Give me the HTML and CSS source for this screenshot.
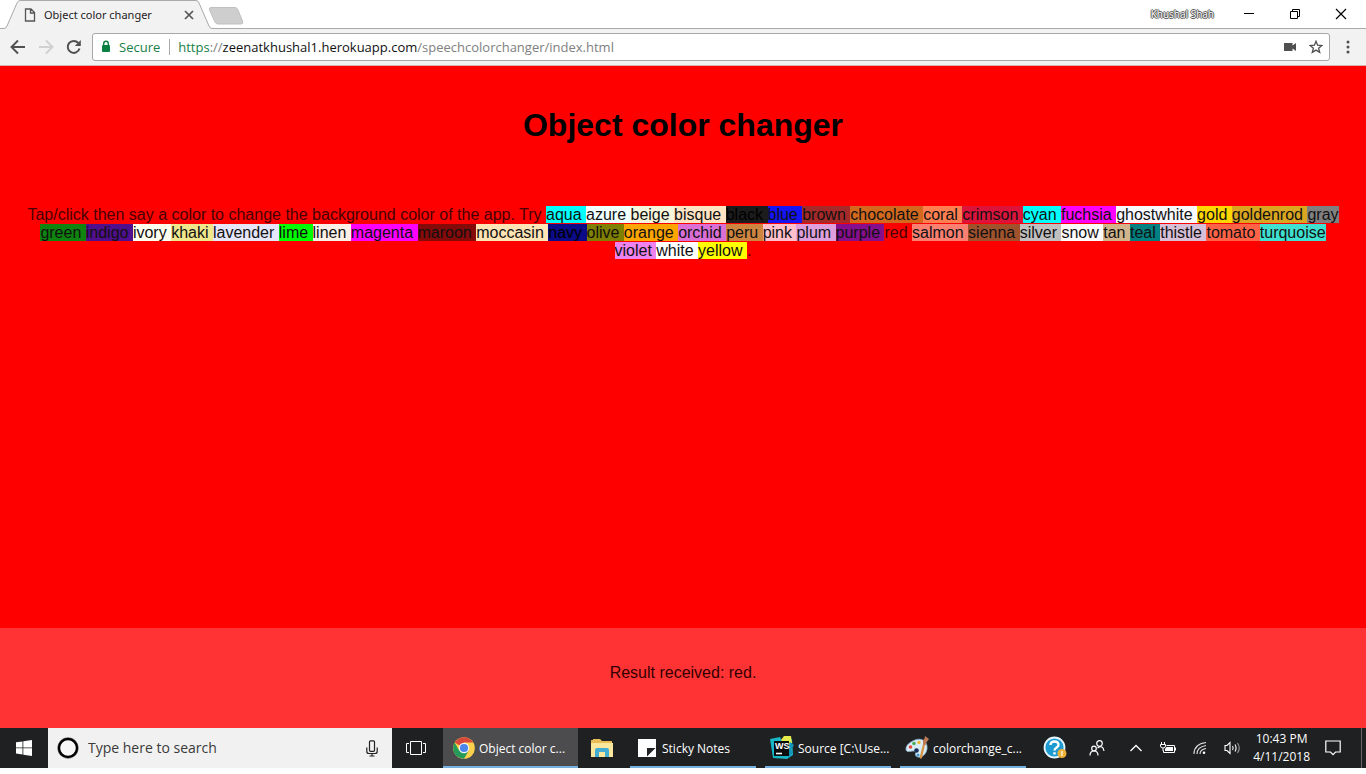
FILE: index.html
```html
<!DOCTYPE html>
<html lang="en">
<head>
<meta charset="utf-8">
<title>Object color changer</title>
<link rel="stylesheet" href="styles.css">
</head>
<body>
<div class="screen">
  <header class="browser">
    <div class="tabstrip">
      <svg class="tab-shape" width="244" height="29" viewBox="0 0 244 29" aria-hidden="true">
        <path d="M0 28.5H4Q6 28.5 7 26L17 3Q18.500 .5 20 .5H196Q198 .5 199 3L209 26Q210 28.500 212 28.500H244V29H0Z" fill="#f2f2f2"/>
        <path d="M0 28.500H4Q6 28.500 7 26L17 3Q18.500 .5 20 .5H196Q198 .5 199 3L209 26Q210 28.500 212 28.500H244" fill="none" stroke="#a9a9a9"/>
        <path d="M211 7.500H235Q237 7.500 238 10L242.500 21Q243.500 24 241 24H218Q216 24 215 22L209.500 10Q208.500 7.500 211 7.500Z" fill="#cecece" stroke="#c0c0c0"/>
      </svg>
      <div class="tab">
        <svg width="12" height="14" viewBox="0 0 12 14" fill="none" stroke="#555" stroke-width="1.300"><path d="M1.500 1H7L10.500 4.500V13H1.500ZM6.500 1V5H10.500"/></svg>
        <span class="tab-title">Object color changer</span>
        <button class="plain" aria-label="Close tab"><svg width="10" height="10" viewBox="0 0 10 10" stroke="#555" stroke-width="1.700"><path d="M1 1L9 9M9 1L1 9"/></svg></button>
      </div>
      <div class="window-controls">
        <span class="user">Khushal Shah</span>
        <button class="plain" aria-label="Minimize"><svg width="12" height="12" viewBox="0 0 12 12" stroke="#000"><path d="M1 5.500H11"/></svg></button>
        <button class="plain" aria-label="Restore"><svg width="12" height="12" viewBox="0 0 12 12" fill="none" stroke="#000"><path d="M1.500 3.500H8.500V10.500H1.500ZM3.500 3.500V1.500H10.500V8.500H8.500"/></svg></button>
        <button class="plain" aria-label="Close"><svg width="12" height="12" viewBox="0 0 12 12" stroke="#000" stroke-width="1.200"><path d="M1 1L11 11M11 1L1 11"/></svg></button>
      </div>
    </div>
    <div class="toolbar">
      <div class="nav">
        <button class="plain" aria-label="Back"><svg width="16" height="16" viewBox="0 0 16 16" fill="none" stroke="#505050" stroke-width="1.900"><path d="M15 8H2M8 1.500L1.500 8L8 14.500"/></svg></button>
        <button class="plain" aria-label="Forward"><svg width="16" height="16" viewBox="0 0 16 16" fill="none" stroke="#d0d0d0" stroke-width="1.900"><path d="M1 8H14M8 1.500L14.500 8L8 14.500"/></svg></button>
        <button class="plain" aria-label="Reload"><svg width="16" height="16" viewBox="0 0 16 16"><path d="M13.500 9.500A6 6 0 1 1 12.300 4" fill="none" stroke="#505050" stroke-width="2"/><path d="M14.800 1V7H8.800Z" fill="#505050"/></svg></button>
      </div>
      <div class="omnibox">
        <svg width="10" height="13" viewBox="0 0 10 13"><rect x="1" y="5" width="8" height="7" rx="1" fill="#0b8043"/><path d="M2.700 5V3.500A2.300 2.300 0 0 1 7.300 3.500V5" fill="none" stroke="#0b8043" stroke-width="1.400"/></svg>
        <span class="secure">Secure</span>
        <span class="address"><span class="scheme">https</span>://<span class="host">zeenatkhushal1.herokuapp.com</span>/speechcolorchanger/index.html</span>
        <svg width="14" height="10" viewBox="0 0 14 10" fill="#505050"><path d="M1 1H9.500V3.500L13 1V9L9.500 6.500V9H1Z"/></svg>
        <button class="plain" aria-label="Bookmark this page"><svg width="14" height="14" viewBox="0 0 14 14" fill="none" stroke="#505050" stroke-width="1.300"><path d="M7 1.300L8.600 5.200L12.900 5.500L9.600 8.200L10.700 12.400L7 10.100L3.300 12.400L4.400 8.200L1.100 5.500L5.400 5.200Z"/></svg></button>
      </div>
      <button class="plain menu" aria-label="Menu"><svg width="4" height="14" viewBox="0 0 4 14" fill="#505050"><circle cx="2" cy="2" r="1.500"/><circle cx="2" cy="7" r="1.500"/><circle cx="2" cy="12" r="1.500"/></svg></button>
    </div>
  </header>

  <main class="page">
    <h1 class="heading">Object color changer</h1>
    <p class="hints">Tap/click then say a color to change the background color of the app. Try
      <span class="c aqua">aqua </span><span class="c azure">azure </span><span class="c beige">beige </span><span class="c bisque">bisque </span><span class="c black">black </span><span class="c blue">blue </span><span class="c brown">brown </span><span class="c chocolate">chocolate </span><span class="c coral">coral </span><span class="c crimson">crimson </span><span class="c cyan">cyan </span><span class="c fuchsia">fuchsia </span><span class="c ghostwhite">ghostwhite </span><span class="c gold">gold </span><span class="c goldenrod">goldenrod </span><span class="c gray">gray </span><span class="c green">green </span><span class="c indigo">indigo </span><span class="c ivory">ivory </span><span class="c khaki">khaki </span><span class="c lavender">lavender </span><span class="c lime">lime </span><span class="c linen">linen </span><span class="c magenta">magenta </span><span class="c maroon">maroon </span><span class="c moccasin">moccasin </span><span class="c navy">navy </span><span class="c olive">olive </span><span class="c orange">orange </span><span class="c orchid">orchid </span><span class="c peru">peru </span><span class="c pink">pink </span><span class="c plum">plum </span><span class="c purple">purple </span><span class="c red">red </span><span class="c salmon">salmon </span><span class="c sienna">sienna </span><span class="c silver">silver </span><span class="c snow">snow </span><span class="c tan">tan </span><span class="c teal">teal </span><span class="c thistle">thistle </span><span class="c tomato">tomato </span><span class="c turquoise">turquoise </span><span class="c violet">violet </span><span class="c white">white </span><span class="c yellow">yellow </span>.</p>
    <div class="result"><p class="output">Result received: red.</p></div>
  </main>

  <footer class="taskbar">
    <button class="plain start" aria-label="Start"><svg width="16" height="16" viewBox="0 0 16 16" fill="#fff"><path d="M0 2.300L6.500 1.400V7.500H0ZM7.300 1.300L16 0V7.500H7.300ZM0 8.300H6.500V14.500L0 13.600ZM7.300 8.300H16V16L7.300 14.700Z"/></svg></button>
    <div class="search">
      <svg width="22" height="22" viewBox="0 0 22 22"><circle cx="11" cy="11" r="9" fill="#fff" stroke="#888" stroke-width="3.400"/><circle cx="11" cy="11" r="9" fill="#f6f6f6" stroke="#000" stroke-width="2.400"/></svg>
      <input class="search-box" type="text" aria-label="Search" placeholder="Type here to search">
      <svg width="12" height="17" viewBox="0 0 12 17" fill="none" stroke="#222" stroke-width="1.200"><rect x="3.500" y=".8" width="5" height="10.500" rx="1"/><path d="M.8 7.500V11.500Q.8 13.500 3 13.500H9Q11.200 13.500 11.200 11.500V7.500M6 13.500V16M3.500 16H8.500"/></svg>
    </div>
    <button class="plain taskview" aria-label="Task view"><svg width="20" height="14" viewBox="0 0 20 14" fill="none" stroke="#fff"><path d="M4.500 .5H15.500V13.500H4.500ZM3 2.500H.5V11.500H3M17 2.500H19.500V11.500H17"/></svg></button>
    <button class="plain task active">
      <svg width="22" height="22" viewBox="0 0 22 22"><circle cx="11" cy="11" r="10.800" fill="#fbd04b"/><path d="M11 11L1.650 5.600A10.800 10.800 0 0 1 20.350 5.600H11Z" fill="#d9493a"/><path d="M1.650 5.600A10.800 10.800 0 0 0 11 21.800L15.700 13.700L11 11L6.300 13.700Z" fill="#249b58"/><circle cx="11" cy="11" r="5.300" fill="#f4f4f4"/><circle cx="11" cy="11" r="4.100" fill="#4b86ec"/></svg>
      <span>Object color c...</span>
    </button>
    <button class="plain explorer" aria-label="File Explorer"><svg width="22" height="20" viewBox="0 0 22 20"><path d="M0 2H2V1H9L11 3H21V19H0Z" fill="#e8bd55"/><path d="M0 5H22V19H0Z" fill="#fbe69d"/><path d="M4 19V12Q4 10 6 10H16Q18 10 18 12V19H14V14H8V19Z" fill="#43acd3"/></svg></button>
    <button class="plain task">
      <svg width="18" height="18" viewBox="0 0 18 18"><path d="M0 0H18V18H0Z" fill="#fff"/><path d="M9 9H17.500L9 17.500Z" fill="#1f2124"/></svg>
      <span>Sticky Notes</span>
    </button>
    <button class="plain task">
      <svg width="24" height="24" viewBox="0 0 24 24"><path d="M0 3L10 1L12 5L22 3L23 19L17 23L3 22Z" fill="#17b7c8"/><path d="M11 4L14 0H21L22 7L14 8Z" fill="#e5eb4d"/><path d="M20 6L24 9L21 14L23 17L18 22Z" fill="#1395ba"/><path d="M4 5H19V20H4Z" fill="#090b0c"/><path d="M6 17.500H12" stroke="#fff" stroke-width="1.600"/><text class="ws-mark" x="5" y="13">WS</text></svg>
      <span>Source [C:\Use...</span>
    </button>
    <button class="plain task">
      <svg width="24" height="24" viewBox="0 0 24 24"><path d="M10 4C18 1 23 7 22 13C21 20 14 23 11 20C9 18 13 16 9 15C5 15 1 17 1 13C1 9 5 6 10 4Z" fill="#d9edf8" stroke="#8db5cf" stroke-width=".8"/><circle cx="5.500" cy="11" r="1.800" fill="#df493b"/><circle cx="9" cy="7.500" r="1.800" fill="#49ac56"/><circle cx="14" cy="6.500" r="1.700" fill="#efb935"/><circle cx="11.500" cy="14.500" r="2.300" fill="#172d56"/><circle cx="13" cy="19" r="1.600" fill="#4696d0"/><path d="M18 8L20 9L17 22Q14 24 15 20Z" fill="#d69447"/><path d="M18 9L18 4Q20 3 20 0L24 3Q22 5 20.500 9Z" fill="#bf7b56"/></svg>
      <span>colorchange_c...</span>
    </button>
    <div class="tray">
      <button class="plain help" aria-label="Help"><svg width="24" height="24" viewBox="0 0 24 24"><circle cx="11.500" cy="11.500" r="10" fill="#1d9bd1" stroke="#e7f6fc" stroke-width="1.800"/><path d="M7.500 9Q7.500 5.500 11.500 5.500T15.500 9C15.500 11.500 11.500 11.500 11.500 14.500M11.500 16.300V18.500" fill="none" stroke="#fff" stroke-width="2.400"/><circle cx="19" cy="17.500" r="4.500" fill="#edb136"/><path d="M19 15V20" stroke="#fff" stroke-width="1.200"/></svg></button>
      <button class="plain people" aria-label="People"><svg width="16" height="16" viewBox="0 0 16 16" fill="none" stroke="#fff" stroke-width="1.200"><circle cx="10.500" cy="3.500" r="2.800"/><circle cx="5" cy="8.500" r="2.300"/><path d="M1 15.500Q1 11 5 11T9 15.500M8.500 8Q14 4.500 15 11"/></svg></button>
      <button class="plain" aria-label="Show hidden icons"><svg width="14" height="8" viewBox="0 0 14 8" fill="none" stroke="#fff" stroke-width="1.300"><path d="M1.500 7L7 1.500L12.500 7"/></svg></button>
      <button class="plain" aria-label="Battery"><svg width="16" height="13" viewBox="0 0 16 13"><path d="M6.500 3.500H14.500V10.500H3.500V8.500" fill="none" stroke="#fff"/><path d="M6.500 5H13V9H5V7ZM15 5.500H16V8.500H15Z" fill="#fff"/><path d="M1.500 0V2.500M4.500 0V2.500M.5 2.500H5.500V4Q5.500 6 3 6T.5 4ZM3 6V9" fill="none" stroke="#fff"/></svg></button>
      <button class="plain" aria-label="Wi-Fi"><svg width="14" height="14" viewBox="0 0 14 14" fill="none" stroke="#ddd" stroke-width="1.100"><path d="M1 13Q1 3 13 1.500M4 13Q4 6 13 4.500M7 13Q7 8.500 13 7.500"/><circle cx="11" cy="11.800" r="1.300" fill="#fff" stroke="none"/></svg></button>
      <button class="plain" aria-label="Volume"><svg width="17" height="14" viewBox="0 0 17 14" fill="none" stroke="#fff" stroke-width="1.100"><path d="M1 4.500H3L6 1.500V12.500L3 9.500H1ZM8.500 5Q10 7 8.500 9M11 3.500Q13.200 7 11 10.500"/><path d="M13.500 2Q17 7 13.500 12" stroke="#999"/></svg></button>
      <time class="clock" datetime="2018-04-11T22:43"><span>10:43 PM</span><span>4/11/2018</span></time>
      <button class="plain notifications" aria-label="Notifications"><svg width="16" height="16" viewBox="0 0 16 16" fill="none" stroke="#fff" stroke-width="1.200"><path d="M.8 1H15.200V12H10.500L8 14.700L5.500 12H.8Z"/></svg></button>
    </div>
  </footer>
</div>
</body>
</html>
```
FILE: styles.css
```css
* { box-sizing: border-box; }
html { height: 100%; background: #fff; }
body { margin: 0; height: 100%; padding-bottom: 6px; font-family: "Open Sans", "Noto Sans", sans-serif; }
svg { display: block; flex: none; }
.plain { margin: 0; padding: 0; border: 0; background: none; color: inherit; font: inherit; }
.screen { height: 100%; display: flex; flex-direction: column; }

.tabstrip { position: relative; height: 29px; display: flex; align-items: center; background: linear-gradient(#a9a9a9, #a9a9a9) bottom / 100% 1px no-repeat #fff; }
.tab-shape { position: absolute; left: 0; top: 0; }
.tab { position: relative; width: 194px; padding-left: 24px; display: flex; align-items: center; gap: 8px; font-size: 12px; line-height: 16px; color: #222; }
.tab-title { flex: 1; white-space: nowrap; font-family: "Noto Sans", sans-serif; font-size: 11px; }
.window-controls { margin-left: auto; padding-right: 19px; display: flex; align-items: center; gap: 34px; padding-bottom: 2px; }
.user { font-size: 10px; line-height: 14px; color: #fff; text-shadow: 1px 0 #555, -1px 0 #555, 0 1px #555, 0 -1px #555, 0 0 2px #777; margin-right: -5px; }
.toolbar { height: 37px; padding: 0 16px 1px 10px; display: flex; align-items: center; background: #f2f2f2; border-bottom: 1px solid #d8b0b0; }
.nav { display: flex; gap: 12px; width: 82px; }
.omnibox { flex: 1; height: 28px; border: 1px solid #a8a8a8; border-radius: 3px; background: #fff; display: flex; align-items: center; padding: 0 6px 0 8px; gap: 8px; font-size: 13px; line-height: 18px; }
.secure { color: #188048; padding-right: 9px; border-right: 1px solid #aaa; line-height: 16px; }
.address { flex: 1; color: #808080; white-space: nowrap; }
.scheme { color: #188048; }
.host { color: #111; }
.omnibox > svg:nth-of-type(2) { margin-right: 4px; }
.menu { margin-left: 16px; }

.page { flex: 1; min-height: 0; display: flex; flex-direction: column; background: #f00; font-family: "Liberation Sans", Arial, sans-serif; font-size: 16px; text-align: center; color: #000; }
.heading { margin: 0; padding: 41px 20px; font-size: 32px; line-height: 37px; }
.hints { margin: 0; padding: 21px 20px; line-height: 18px; color: #480000; }
.c { color: #111; }
.result { margin-top: auto; height: 100px; background: #f33; display: flex; justify-content: center; padding-top: 36px; }
.output { margin: 0; line-height: 18px; color: #300; }
.aqua { background: aqua; }
.azure { background: azure; }
.beige { background: beige; }
.bisque { background: bisque; }
.black { background: #1c1c1c; color: #000; }
.blue { background: #1414f5; }
.brown { background: brown; }
.chocolate { background: chocolate; }
.coral { background: coral; }
.crimson { background: crimson; }
.cyan { background: cyan; }
.fuchsia { background: fuchsia; }
.ghostwhite { background: ghostwhite; }
.gold { background: gold; }
.goldenrod { background: goldenrod; }
.gray { background: gray; }
.green { background: #0f850f; }
.indigo { background: #500f8c; }
.ivory { background: ivory; }
.khaki { background: khaki; }
.lavender { background: lavender; }
.lime { background: lime; }
.linen { background: linen; }
.magenta { background: magenta; }
.maroon { background: #850a0a; }
.moccasin { background: moccasin; }
.navy { background: #0c0c88; color: #000; }
.olive { background: olive; }
.orange { background: orange; }
.orchid { background: orchid; }
.peru { background: peru; }
.pink { background: pink; }
.plum { background: plum; }
.purple { background: #850f8c; }
.red { background: red; color: #480000; }
.salmon { background: salmon; }
.sienna { background: sienna; }
.silver { background: silver; }
.snow { background: snow; }
.tan { background: tan; }
.teal { background: teal; }
.thistle { background: thistle; }
.tomato { background: tomato; }
.turquoise { background: turquoise; }
.violet { background: violet; }
.white { background: white; }
.yellow { background: yellow; }

.taskbar { height: 40px; display: flex; align-items: stretch; background: #1e2022; color: #fff; font-size: 12px; }
.taskbar > .plain { display: flex; align-items: center; flex: none; }
.start, .taskbar > .taskview, .taskbar > .explorer { justify-content: center; }
.start { width: 48px; }
.search { width: 344px; background: #f1f1f1; display: flex; align-items: center; gap: 9px; padding: 0 14px 0 9px; }
.search-box { flex: 1; min-width: 0; border: 0; padding: 0; background: none; font: 14px/20px "Open Sans", sans-serif; color: #333; }
.search-box::placeholder { color: #3a3a3a; opacity: 1; }
.taskview { width: 51px; padding-right: 3px; }
.explorer { width: 47px; }
.taskbar > .task { width: 126px; margin-right: 9px; padding: 2px 0 0 5px; gap: 4px; border-bottom: 2px solid #76b0e0; white-space: nowrap; overflow: hidden; }
.taskbar > .active { width: 135px; margin-right: 0; padding-left: 10px; background: #4c4c4e; }
.taskbar > .explorer + .task { margin-left: 5px; padding-left: 8px; gap: 6px; }
.ws-mark { font: bold 9px "Liberation Sans", sans-serif; fill: #fff; }
.tray { flex: 1; display: flex; align-items: center; justify-content: flex-end; gap: 17px; padding-right: 4px; }
.help { margin-right: 5px; }
.people { margin-right: 7px; }
.clock { display: flex; flex-direction: column; align-items: center; line-height: 18px; margin: 0 -2px 0 -5px; }
.notifications { padding-right: 20px; border-right: 1px solid #666; height: 40px; }
```
